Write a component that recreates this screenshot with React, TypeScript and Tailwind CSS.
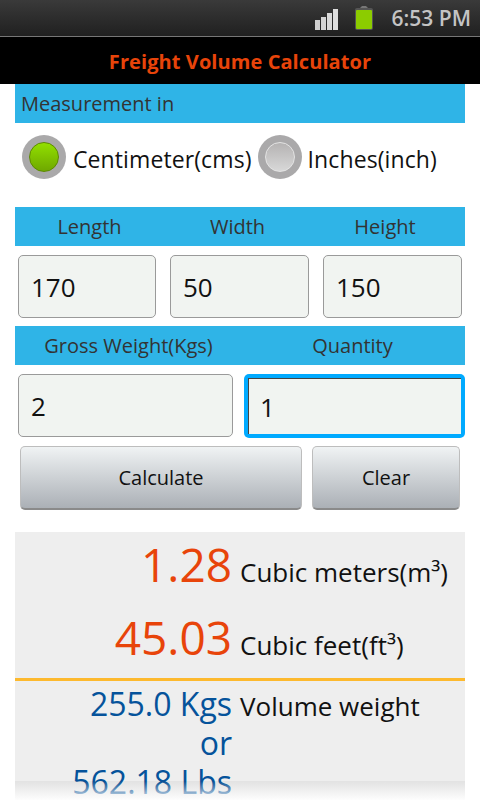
const font = { fontFamily: '"Open Sans", "Noto Sans", sans-serif' };

function SignalIcon() {
    return (
        <svg width="26" height="22" viewBox="0 0 26 22" className="block">
            <rect x="1" y="12" width="5" height="10" fill="#cfcfcf" />
            <rect x="7" y="9" width="5" height="13" fill="#d4d4d4" />
            <rect x="13" y="5" width="5" height="17" fill="#d9d9d9" />
            <rect x="19" y="1" width="5" height="21" fill="#dedede" />
        </svg>
    );
}

function BatteryIcon() {
    return (
        <svg width="20" height="26" viewBox="0 0 20 26" className="block">
            <path d="M6 3 L8 1 H12 L14 3 Z" fill="#777" />
            <rect x="1" y="3" width="18" height="22" rx="2" fill="#555" />
            <rect x="2" y="5" width="16" height="19" rx="1" fill="#8ccc00" />
        </svg>
    );
}

function Radio({ checked }: { checked?: boolean }) {
    return (
        <div className="w-[44px] h-[44px] rounded-full bg-[#aaa9aa] flex items-center justify-center shrink-0">
            {checked ? (
                <div className="w-[30px] h-[30px] rounded-full border border-[#5c8a00] bg-gradient-to-b from-[#92e000] to-[#6fa800]" />
            ) : (
                <div className="w-[30px] h-[30px] rounded-full border border-[#e4e4e4] bg-gradient-to-b from-[#b5b3b3] to-[#d8d8d8]" />
            )}
        </div>
    );
}

function Field({ value, className }: { value: string; className?: string }) {
    return (
        <div className={`h-[63px] rounded-[5px] border border-[#9a9a9a] bg-[#f1f4f1] flex items-center pl-[12px] pt-[1px] text-[26px] text-[#111] ${className ?? ''}`}>
            {value}
        </div>
    );
}

function Btn({ label, className }: { label: string; className?: string }) {
    return (
        <div className={`h-[64px] rounded-[5px] border border-[#bdbdbd] border-b-[2px] border-b-[#8a8a8a] bg-gradient-to-b from-[#f0f3f4] to-[#abb0b6] flex items-center justify-center text-[20px] text-[#111] ${className ?? ''}`}>
            {label}
        </div>
    );
}

export default function App() {
    return (
        <div className="relative w-[480px] h-[800px] overflow-hidden bg-white" style={font}>
            {/* status bar */}
            <div className="h-[37px] bg-gradient-to-b from-[#3a3a3a] to-[#202020] border-b border-[#777] flex items-center justify-end pr-[9px]">
                <div className="mr-[14px] mt-[1px]"><SignalIcon /></div>
                <div className="mr-[18px] mb-[1px]"><BatteryIcon /></div>
                <span className="text-[21px] font-semibold text-[#c4c4c4] leading-none">6:53 PM</span>
            </div>

            {/* title */}
            <div className="h-[47px] bg-black flex items-center justify-center pt-[2px] text-[20px] font-bold tracking-[0.08px] text-[#e8440a]">
                Freight Volume Calculator
            </div>

            <div className="px-[15px]">
                <div className="h-[39px] bg-[#2fb4e7] flex items-center pl-[6px] pt-[1px] text-[20px] text-[#333]">
                    Measurement in
                </div>

                <div className="h-[84px] flex items-center pl-[7px] pb-[16px] text-[23px] tracking-[0.1px] text-[#111]">
                    <Radio checked />
                    <span className="ml-[7px] mr-[6px] mt-[5px]">Centimeter(cms)</span>
                    <Radio />
                    <span className="ml-[6px] mt-[5px]">Inches(inch)</span>
                </div>

                <div className="h-[39px] bg-[#2fb4e7] grid grid-cols-[149px_147px_148px] items-center pt-[1px] text-center text-[20px] text-[#333]">
                    <span>Length</span>
                    <span>Width</span>
                    <span>Height</span>
                </div>

                <div className="flex gap-[14px] pl-[3px] pt-[9px] pb-[8px]">
                    <Field value="170" className="w-[138px]" />
                    <Field value="50" className="w-[139px]" />
                    <Field value="150" className="w-[139px]" />
                </div>

                <div className="h-[39px] bg-[#2fb4e7] grid grid-cols-[227px_221px] items-center pt-[1px] text-center text-[20px] text-[#333]">
                    <span>Gross Weight(Kgs)</span>
                    <span>Quantity</span>
                </div>

                <div className="flex pl-[3px] pt-[9px] pb-[8px]">
                    <Field value="2" className="w-[215px]" />
                    <div className="ml-[11px] w-[221px] h-[64px] rounded-[5px] bg-[#00aaff] p-[4px]">
                        <div className="h-full border-t border-l border-[#444] bg-[#f1f4f1] flex items-center pl-[11px] pt-[1px] text-[26px] text-[#111]">
                            1
                        </div>
                    </div>
                </div>

                <div className="flex pl-[5px]">
                    <Btn label="Calculate" className="w-[282px]" />
                    <Btn label="Clear" className="w-[148px] ml-[10px]" />
                </div>

                {/* results */}
                <div className="mt-[22px] h-[268px] bg-[#eeeeee]">
                    <div className="h-[149px] border-b-[3px] border-[#fdb92e]">
                        <div className="flex items-baseline h-[73px]">
                            <span className="w-[217px] text-right text-[46px] leading-[65px] text-[#e8440a]">1.28</span>
                            <span className="ml-[8px] text-[26px] text-[#111]">Cubic meters(m³)</span>
                        </div>
                        <div className="flex items-baseline h-[73px]">
                            <span className="w-[217px] text-right text-[46px] leading-[65px] text-[#e8440a]">45.03</span>
                            <span className="ml-[8px] text-[26px] text-[#111]">Cubic feet(ft³)</span>
                        </div>
                    </div>
                    <div className="flex items-start pt-[3px]">
                        <div className="w-[217px] text-right text-[32px] leading-[39px] text-[#05539b]">
                            255.0 Kgs<br />or<br />562.18 Lbs
                        </div>
                        <span className="ml-[8px] mt-[3px] text-[26px] leading-[39px] text-[#111]">Volume weight</span>
                    </div>
                </div>
            </div>

            {/* bottom fading edge of the scroll area */}
            <div className="absolute left-[15px] right-[15px] bottom-0 h-[19px] bg-gradient-to-b from-black/[0.04] to-white/90" />
        </div>
    );
}
